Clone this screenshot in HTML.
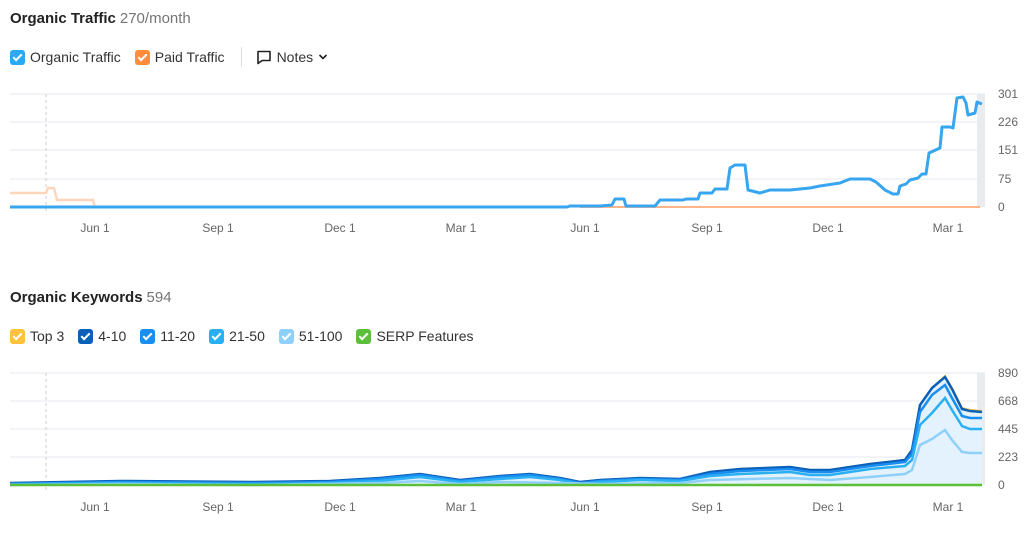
<!DOCTYPE html>
<html><head><meta charset="utf-8"><style>
body{margin:0;width:1024px;height:536px;background:#fff;font-family:"Liberation Sans",sans-serif;color:#333;position:relative;overflow:hidden}
.t{position:absolute;font-size:15px;font-weight:bold;color:#222}
.t span{font-weight:normal;color:#757575;margin-left:4px}
.lg{position:absolute;font-size:14px;color:#333;display:flex;align-items:center}
.cb{width:15px;height:15px;border-radius:3px;display:inline-block;margin-right:5px;position:relative}
.cb:after{content:"";position:absolute;left:5px;top:2px;width:3px;height:7px;border:solid #fff;border-width:0 2px 2px 0;transform:rotate(45deg)}
.it{display:flex;align-items:center;margin-right:14px}
svg{position:absolute;left:0;top:0}
</style></head><body>
<div class="t" style="left:10px;top:10px">Organic Traffic<span>270/month</span></div>
<div class="lg" style="left:10px;top:47px">
<div class="it"><i class="cb" style="background:#2aa8f2"></i>Organic Traffic</div>
<div class="it"><i class="cb" style="background:#ff8c3a"></i>Paid Traffic</div>
<div style="width:1px;height:20px;background:#ddd;margin:0 14px 0 2px"></div>
<div class="it"><svg style="position:static;margin-right:5px" width="16" height="16" viewBox="0 0 16 16"><path d="M2 2.5h12v9H6l-4 3z" fill="none" stroke="#222" stroke-width="1.6" stroke-linejoin="round"/></svg>Notes<svg style="position:static;margin-left:5px" width="10" height="8" viewBox="0 0 10 8"><path d="M1.5 2l3.5 3.5L8.5 2" fill="none" stroke="#222" stroke-width="1.6"/></svg></div>
</div>
<div class="t" style="left:10px;top:289px">Organic Keywords<span>594</span></div>
<div class="lg" style="left:10px;top:328px">
<div class="it"><i class="cb" style="background:#ffc23a"></i>Top 3</div>
<div class="it"><i class="cb" style="background:#0a5fb8"></i>4-10</div>
<div class="it"><i class="cb" style="background:#1a8ef0"></i>11-20</div>
<div class="it"><i class="cb" style="background:#2ab0f2"></i>21-50</div>
<div class="it"><i class="cb" style="background:#8fd0fb"></i>51-100</div>
<div class="it"><i class="cb" style="background:#5bbf3a"></i>SERP Features</div>
</div>
<svg width="1024" height="536" font-family="Liberation Sans,sans-serif" font-size="12" fill="#666">
<g stroke="#e6e8ef" stroke-width="1">
<line x1="10" x2="985" y1="94" y2="94"/><line x1="10" x2="985" y1="122" y2="122"/><line x1="10" x2="985" y1="150" y2="150"/><line x1="10" x2="985" y1="179" y2="179"/>
<line x1="10" x2="985" y1="373" y2="373"/><line x1="10" x2="985" y1="401" y2="401"/><line x1="10" x2="985" y1="429" y2="429"/><line x1="10" x2="985" y1="457" y2="457"/>
</g>
<rect x="977" y="94" width="8" height="113" fill="#e9ecef"/><rect x="977" y="373" width="8" height="112" fill="#e9ecef"/>
<line x1="46" x2="46" y1="94" y2="215" stroke="#ccc" stroke-dasharray="3,3"/>
<line x1="46" x2="46" y1="373" y2="492" stroke="#ccc" stroke-dasharray="3,3"/>
<g text-anchor="middle"><text x="95" y="232">Jun 1</text><text x="218" y="232">Sep 1</text><text x="340" y="232">Dec 1</text><text x="461" y="232">Mar 1</text><text x="585" y="232">Jun 1</text><text x="707" y="232">Sep 1</text><text x="828" y="232">Dec 1</text><text x="948" y="232">Mar 1</text>
<text x="95" y="511">Jun 1</text><text x="218" y="511">Sep 1</text><text x="340" y="511">Dec 1</text><text x="461" y="511">Mar 1</text><text x="585" y="511">Jun 1</text><text x="707" y="511">Sep 1</text><text x="828" y="511">Dec 1</text><text x="948" y="511">Mar 1</text></g>
<g><text x="998" y="98">301</text><text x="998" y="126">226</text><text x="998" y="154">151</text><text x="998" y="183">75</text><text x="998" y="211">0</text>
<text x="998" y="377">890</text><text x="998" y="405">668</text><text x="998" y="433">445</text><text x="998" y="461">223</text><text x="998" y="489">0</text></g>
<path d="M10 193 H46 L48 188 H54 L57 200 H93 L95 207" fill="none" stroke="#ffd6bb" stroke-width="2.5"/>
<path d="M580 207 H980" stroke="#ffb48a" stroke-width="2"/>
<path d="M10 207 H567 L570 206 H600 L612 205 L615 199 H624 L626 206 H655 L660 200 H683 L686 199 H698 L700 193 H712 L715 189 H727 L730 168 L735 165 H745 L748 190 L760 193 L770 190 H790 L810 188 L820 186 L840 183 L850 179 H870 L876 182 L885 190 L893 194 L898 194 L900 186 L906 184 L910 180 L918 178 L922 174 L926 174 L929 153 L940 148 L942 127 L950 127 L953 128 L957 98 L963 97 L966 103 L968 115 L975 113 L977 102 L982 104" fill="none" stroke="#38a5f0" stroke-width="3" stroke-linejoin="round"/>
<path d="M10 483 L120 481 L250 482 L330 481 L380 478 L420 474 L460 480 L500 476 L530 474 L560 478 L580 482 L600 480 L640 478 L680 479 L710 472 L740 469 L790 467 L810 470 L830 470 L870 464 L905 460 L912 450 L920 405 L932 388 L945 376 L952 388 L962 408 L970 410 L982 411 V485 H10Z" fill="#e3f2fd"/>
<path d="M10 483 L120 481 L250 482 L330 481 L380 478 L420 474 L460 480 L500 476 L530 474 L560 478 L580 482 L600 480 L640 478 L680 479 L710 472 L740 469 L790 467 L810 470 L830 470 L870 464 L905 460 L912 450 L920 405 L932 388 L945 376 L952 388 L962 408 L970 410 L982 411" fill="none" stroke="#ffc23a" stroke-width="2"/>
<path d="M10 483 L120 481 L250 482 L330 481 L380 478 L420 474 L460 480 L500 476 L530 474 L560 478 L580 482 L600 480 L640 478 L680 479 L710 472 L740 469 L790 467 L810 470 L830 470 L870 464 L905 460 L912 450 L920 405 L932 388 L945 377 L952 389 L962 409 L970 411 L982 412" fill="none" stroke="#0a5fb8" stroke-width="2.5"/>
<path d="M10 484 L120 482 L250 483 L330 482 L380 479 L420 475 L460 481 L500 477 L530 475 L560 479 L580 483 L600 481 L640 479 L680 480 L710 474 L740 471 L790 469 L810 472 L830 472 L870 466 L905 462 L912 454 L920 412 L932 395 L945 385 L952 398 L962 416 L970 418 L982 418" fill="none" stroke="#1a8ef0" stroke-width="2.5"/>
<path d="M10 484 L120 483 L250 484 L330 483 L380 481 L420 477 L460 482 L500 479 L530 477 L560 480 L580 484 L600 482 L640 480 L680 481 L710 476 L740 474 L790 472 L810 475 L830 475 L870 469 L905 466 L912 460 L920 425 L932 413 L945 398 L952 410 L962 426 L970 429 L982 429" fill="none" stroke="#2ab0f2" stroke-width="2.5"/>
<path d="M10 485 L120 484 L250 485 L380 483 L420 481 L460 484 L500 482 L560 483 L600 484 L680 483 L710 480 L790 478 L830 480 L870 477 L905 474 L912 470 L920 445 L932 439 L945 430 L952 440 L962 452 L970 453 L982 453" fill="none" stroke="#8fd0fb" stroke-width="2.5"/>
<path d="M10 485 H982" stroke="#5bbf3a" stroke-width="2.5"/>
</svg>
</body></html>
